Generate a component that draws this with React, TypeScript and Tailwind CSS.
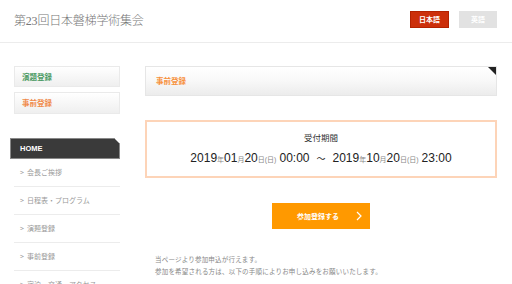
import React from "react";

const jp = { fontFamily: '"Noto Sans CJK JP", "Noto Sans", sans-serif' };

export default function App() {
  const menu = ["会長ご挨拶", "日程表・プログラム", "演題登録", "事前登録", "宿泊・交通・アクセス"];
  return (
    <div className="w-[512px] h-[284px] overflow-hidden bg-white" style={jp}>
      <header className="h-[43px] border-b border-[#ececec] flex items-center justify-between pl-[14px] pr-[15px]">
        <div className="text-[12px] text-[#777] font-light tracking-[-0.2px]" style={{ fontFamily: '"Liberation Serif", "Noto Sans CJK JP", serif' }}>
          第23回日本磐梯学術集会
        </div>
        <div className="flex gap-[10px] mb-[4px]">
          <div className="w-[39px] h-[17px] bg-[#cc2f0a] border border-[#b32200] flex items-center justify-center text-white text-[7px] font-bold">日本語</div>
          <div className="w-[38px] h-[17px] bg-[#e2e2e2] flex items-center justify-center text-white text-[7px] font-bold">英語</div>
        </div>
      </header>
      <div className="flex pt-[23px] pl-[10px]">
        <aside className="w-[110px] shrink-0">
          <div className="ml-[4px] h-[21px] border border-[#eaeaea] bg-gradient-to-b from-white to-[#efefef] flex items-center pl-[7px] text-[7.5px] font-bold text-[#4b9a63]">演題登録</div>
          <div className="ml-[4px] mt-[5px] h-[22px] border border-[#eaeaea] bg-gradient-to-b from-white to-[#efefef] flex items-center pl-[7px] text-[7.5px] font-bold text-[#f08b4c]">事前登録</div>
          <div className="mt-[24px] h-[21px] bg-[#3a3a3a] border border-[#888] [clip-path:polygon(0_0,calc(100%-6px)_0,100%_6px,100%_100%,0_100%)] flex items-center pl-[9px] text-white text-[7.5px] font-bold" style={{ fontFamily: '"Liberation Sans", sans-serif' }}>HOME</div>
          <ul className="ml-[4px]">
            {menu.map((m) => (
              <li key={m} className="h-[28px] border-b border-[#ececec] flex items-center pl-[6px] text-[7px] text-[#999]">
                <span className="mr-[3px] text-[7px]">&gt;</span>{m}
              </li>
            ))}
          </ul>
        </aside>
        <main className="ml-[25px] w-[352px]">
          <div className="relative h-[30px] border border-[#e6e6e6] bg-gradient-to-b from-white via-[#f8f8f8] to-[#ececec] flex items-center pl-[10px] text-[7.5px] font-bold text-[#f7913d]">
            事前登録
            <div className="absolute top-0 right-0 w-0 h-0 border-t-[8px] border-t-[#222] border-l-[8px] border-l-transparent" />
          </div>
          <div className="mt-[24px] h-[58px] border-2 border-[#fdd4b8] flex flex-col items-center justify-center">
            <div className="text-[8.5px] text-[#333]">受付期間</div>
            <div className="mt-[5px] text-[12px] text-[#222] flex items-baseline" style={{ fontFamily: '"Liberation Sans", "Noto Sans CJK JP", sans-serif' }}>
              <span>2019</span><span className="text-[7px] text-[#888]">年</span>
              <span>01</span><span className="text-[7px] text-[#888]">月</span>
              <span>20</span><span className="text-[7px] text-[#888]">日(日)</span>
              <span className="ml-[3px]">00:00</span>
              <span className="mx-[7px] text-[9px]">～</span>
              <span>2019</span><span className="text-[7px] text-[#888]">年</span>
              <span>10</span><span className="text-[7px] text-[#888]">月</span>
              <span>20</span><span className="text-[7px] text-[#888]">日(日)</span>
              <span className="ml-[3px]">23:00</span>
            </div>
          </div>
          <div className="mt-[25px] flex justify-center">
            <div className="relative w-[98px] h-[26px] bg-[#ff9900] flex items-center pl-[25px] text-white text-[7px] font-bold">
              参加登録する
              <svg className="absolute right-[8px] top-[8px]" width="6" height="10" viewBox="0 0 6 10">
                <path d="M1 1 L5 5 L1 9" fill="none" stroke="white" strokeWidth="1.2" />
              </svg>
            </div>
          </div>
          <div className="mt-[24px] pl-[10px] text-[6.5px] leading-[12px] text-[#888] tracking-[0.2px]">
            <p>当ページより参加申込が行えます。</p>
            <p>参加を希望される方は、以下の手順によりお申し込みをお願いいたします。</p>
          </div>
        </main>
      </div>
    </div>
  );
}
